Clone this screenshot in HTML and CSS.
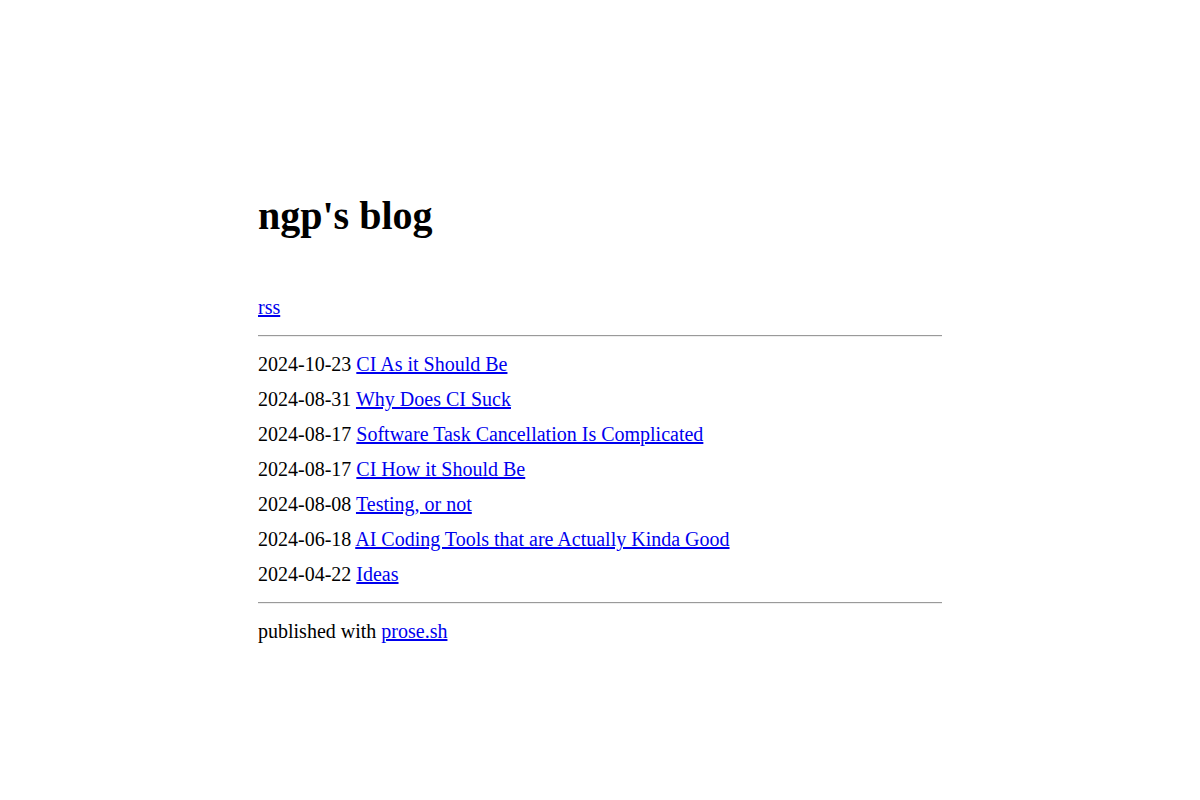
FILE: index.html
```html
<!DOCTYPE html>
<html lang="en">
<head>
<meta charset="utf-8">
<title>ngp's blog</title>
<link rel="stylesheet" href="styles.css">
</head>
<body>
<main class="page">
  <header class="head">
    <h1 class="title">ngp's blog</h1>
    <nav class="nav"><a href="#">rss</a></nav>
  </header>
  <hr class="rule">
  <section class="posts">
    <div class="post"><span class="date">2024-10-23</span> <a href="#">CI As it Should Be</a></div>
    <div class="post"><span class="date">2024-08-31</span> <a href="#">Why Does CI Suck</a></div>
    <div class="post"><span class="date">2024-08-17</span> <a href="#">Software Task Cancellation Is Complicated</a></div>
    <div class="post"><span class="date">2024-08-17</span> <a href="#">CI How it Should Be</a></div>
    <div class="post"><span class="date">2024-08-08</span> <a href="#">Testing, or not</a></div>
    <div class="post"><span class="date">2024-06-18</span> <a href="#">AI Coding Tools that are Actually Kinda Good</a></div>
    <div class="post"><span class="date">2024-04-22</span> <a href="#">Ideas</a></div>
  </section>
  <hr class="rule">
  <footer class="foot">published with <a href="#">prose.sh</a></footer>
</main>
</body>
</html>
```
FILE: styles.css
```css
html, body {
  margin: 0;
  padding: 0;
  background: #fff;
}
body {
  font-family: "Liberation Serif", "Times New Roman", serif;
  font-size: 20px;
  line-height: 1.75;
  color: #000;
}
a {
  color: #0000ee;
}
.page {
  width: 684px;
  margin: 0 auto;
  padding-top: 181px;
}
.title {
  font-size: 40px;
  font-weight: bold;
  line-height: 70px;
  margin: 0 0 39px 0;
}
.nav {
  margin: 0;
}
.rule {
  border: 0;
  border-top: 1px solid #9a9a9a;
  border-bottom: 1px solid #eeeeee;
  margin: 10px 0;
  height: 0;
}
.post {
  margin: 0;
}
.foot {
  margin: 0;
}
```
